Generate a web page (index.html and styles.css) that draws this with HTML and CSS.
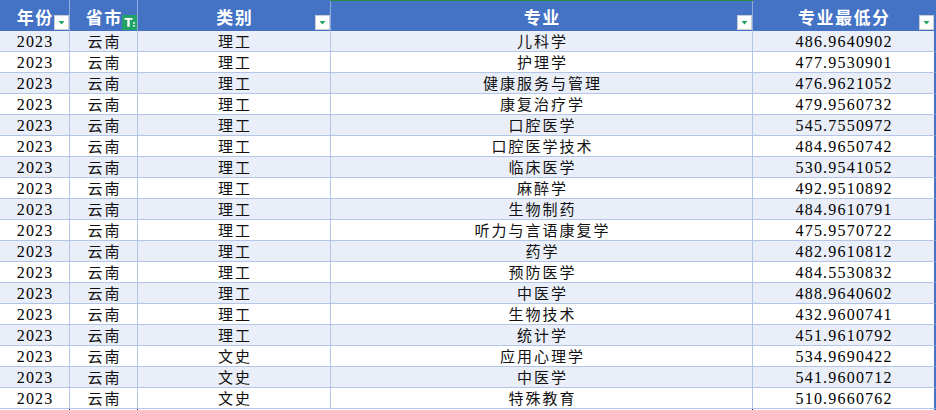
FILE: index.html
```html
<!DOCTYPE html>
<html lang="zh-CN">
<head>
<meta charset="utf-8">
<title>专业最低分</title>
<link rel="stylesheet" href="styles.css">
</head>
<body>
<div class="sheet">
  <div class="row head">
    <div class="cell">年份<span class="fbtn"><svg viewBox="0 0 13 13" width="13" height="13"><path d="M3.5 5h6l-3 3.5z" fill="#1FA463"/></svg></span></div>
    <div class="cell">省市<span class="fbtn active"><svg viewBox="0 0 15 15" width="15" height="15"><path d="M2.5 3h8v1.8l-2.8 0v7h-2.4v-7l-2.8 0z" fill="#fff"/><rect x="11" y="7.4" width="2" height="1.3" fill="#fff"/><rect x="11" y="10.2" width="2" height="1.3" fill="#fff"/></svg></span></div>
    <div class="cell">类别<span class="fbtn"><svg viewBox="0 0 13 13" width="13" height="13"><path d="M3.5 5h6l-3 3.5z" fill="#1FA463"/></svg></span></div>
    <div class="cell sel">专业<span class="fbtn"><svg viewBox="0 0 13 13" width="13" height="13"><path d="M3.5 5h6l-3 3.5z" fill="#1FA463"/></svg></span></div>
    <div class="cell">专业最低分<span class="fbtn"><svg viewBox="0 0 13 13" width="13" height="13"><path d="M3.5 5h6l-3 3.5z" fill="#1FA463"/></svg></span></div>
  </div>
  <div class="row band"><div class="cell num">2023</div><div class="cell">云南</div><div class="cell">理工</div><div class="cell">儿科学</div><div class="cell num">486.9640902</div></div>
  <div class="row"><div class="cell num">2023</div><div class="cell">云南</div><div class="cell">理工</div><div class="cell">护理学</div><div class="cell num">477.9530901</div></div>
  <div class="row band"><div class="cell num">2023</div><div class="cell">云南</div><div class="cell">理工</div><div class="cell">健康服务与管理</div><div class="cell num">476.9621052</div></div>
  <div class="row"><div class="cell num">2023</div><div class="cell">云南</div><div class="cell">理工</div><div class="cell">康复治疗学</div><div class="cell num">479.9560732</div></div>
  <div class="row band"><div class="cell num">2023</div><div class="cell">云南</div><div class="cell">理工</div><div class="cell">口腔医学</div><div class="cell num">545.7550972</div></div>
  <div class="row"><div class="cell num">2023</div><div class="cell">云南</div><div class="cell">理工</div><div class="cell">口腔医学技术</div><div class="cell num">484.9650742</div></div>
  <div class="row band"><div class="cell num">2023</div><div class="cell">云南</div><div class="cell">理工</div><div class="cell">临床医学</div><div class="cell num">530.9541052</div></div>
  <div class="row"><div class="cell num">2023</div><div class="cell">云南</div><div class="cell">理工</div><div class="cell">麻醉学</div><div class="cell num">492.9510892</div></div>
  <div class="row band"><div class="cell num">2023</div><div class="cell">云南</div><div class="cell">理工</div><div class="cell">生物制药</div><div class="cell num">484.9610791</div></div>
  <div class="row"><div class="cell num">2023</div><div class="cell">云南</div><div class="cell">理工</div><div class="cell">听力与言语康复学</div><div class="cell num">475.9570722</div></div>
  <div class="row band"><div class="cell num">2023</div><div class="cell">云南</div><div class="cell">理工</div><div class="cell">药学</div><div class="cell num">482.9610812</div></div>
  <div class="row"><div class="cell num">2023</div><div class="cell">云南</div><div class="cell">理工</div><div class="cell">预防医学</div><div class="cell num">484.5530832</div></div>
  <div class="row band"><div class="cell num">2023</div><div class="cell">云南</div><div class="cell">理工</div><div class="cell">中医学</div><div class="cell num">488.9640602</div></div>
  <div class="row"><div class="cell num">2023</div><div class="cell">云南</div><div class="cell">理工</div><div class="cell">生物技术</div><div class="cell num">432.9600741</div></div>
  <div class="row band"><div class="cell num">2023</div><div class="cell">云南</div><div class="cell">理工</div><div class="cell">统计学</div><div class="cell num">451.9610792</div></div>
  <div class="row"><div class="cell num">2023</div><div class="cell">云南</div><div class="cell">文史</div><div class="cell">应用心理学</div><div class="cell num">534.9690422</div></div>
  <div class="row band"><div class="cell num">2023</div><div class="cell">云南</div><div class="cell">文史</div><div class="cell">中医学</div><div class="cell num">541.9600712</div></div>
  <div class="row"><div class="cell num">2023</div><div class="cell">云南</div><div class="cell">文史</div><div class="cell">特殊教育</div><div class="cell num">510.9660762</div></div>
  <div class="row tail"><div class="cell"></div><div class="cell"></div><div class="cell"></div><div class="cell"></div><div class="cell"></div></div>
</div>
</body>
</html>
```

FILE: styles.css
```css
html, body {
  margin: 0;
  padding: 0;
  background: #ffffff;
}

.sheet {
  width: 936px;
  font-family: "Liberation Serif", "Noto Sans CJK SC", serif;
  color: #111111;
}

.row {
  display: grid;
  grid-template-columns: 70px 68px 193px 422px 183px;
  height: 21px;
}

.cell {
  box-sizing: border-box;
  border-right: 1px solid #B4C6E7;
  border-bottom: 1px solid #B4C6E7;
  display: flex;
  align-items: center;
  justify-content: center;
  font-family: "Noto Sans CJK SC", sans-serif;
  font-size: 15px;
  letter-spacing: 2px;
  padding-left: 2px;
  line-height: 20px;
  white-space: nowrap;
  overflow: hidden;
}

.cell.num {
  font-family: "Liberation Serif", serif;
  font-size: 16px;
  letter-spacing: 1.2px;
  padding-left: 1.2px;
  padding-top: 1px;
  color: #000000;
}

.row .cell:last-child {
  border-right: 2px solid #4472C4;
}

.row.band .cell {
  background: #E9EEF8;
}

.row.head {
  height: 31px;
  background: #4472C4;
}

.row.head .cell {
  position: relative;
  border-bottom: none;
  border-right-color: #8FAADC;
  color: #ffffff;
  font-weight: 700;
  font-size: 17px;
  letter-spacing: 1.5px;
  padding-left: 1.5px;
  padding-top: 2px;
  overflow: visible;
}

.row.head .cell:last-child {
  border-right-color: #4472C4;
}

.row.head .cell.sel::before {
  content: "";
  position: absolute;
  left: -1px;
  right: -1px;
  top: 0;
  height: 1px;
  background: #2E8B3E;
}

.fbtn {
  position: absolute;
  right: 0;
  bottom: 1px;
  width: 15px;
  height: 15px;
  box-sizing: border-box;
  background: #ffffff;
  border: 1px solid #C9CED6;
  display: flex;
  align-items: center;
  justify-content: center;
}

.fbtn.active {
  background: #21A366;
  border: none;
}

.row.tail {
  height: 1px;
}

.row.tail .cell {
  border-bottom: none;
  border-right: 1px solid #1a1a1a;
}

.row.tail .cell:nth-child(3) {
  border-right-color: transparent;
}

.row.tail .cell:last-child {
  border-right: 2px solid #4472C4;
}
```
